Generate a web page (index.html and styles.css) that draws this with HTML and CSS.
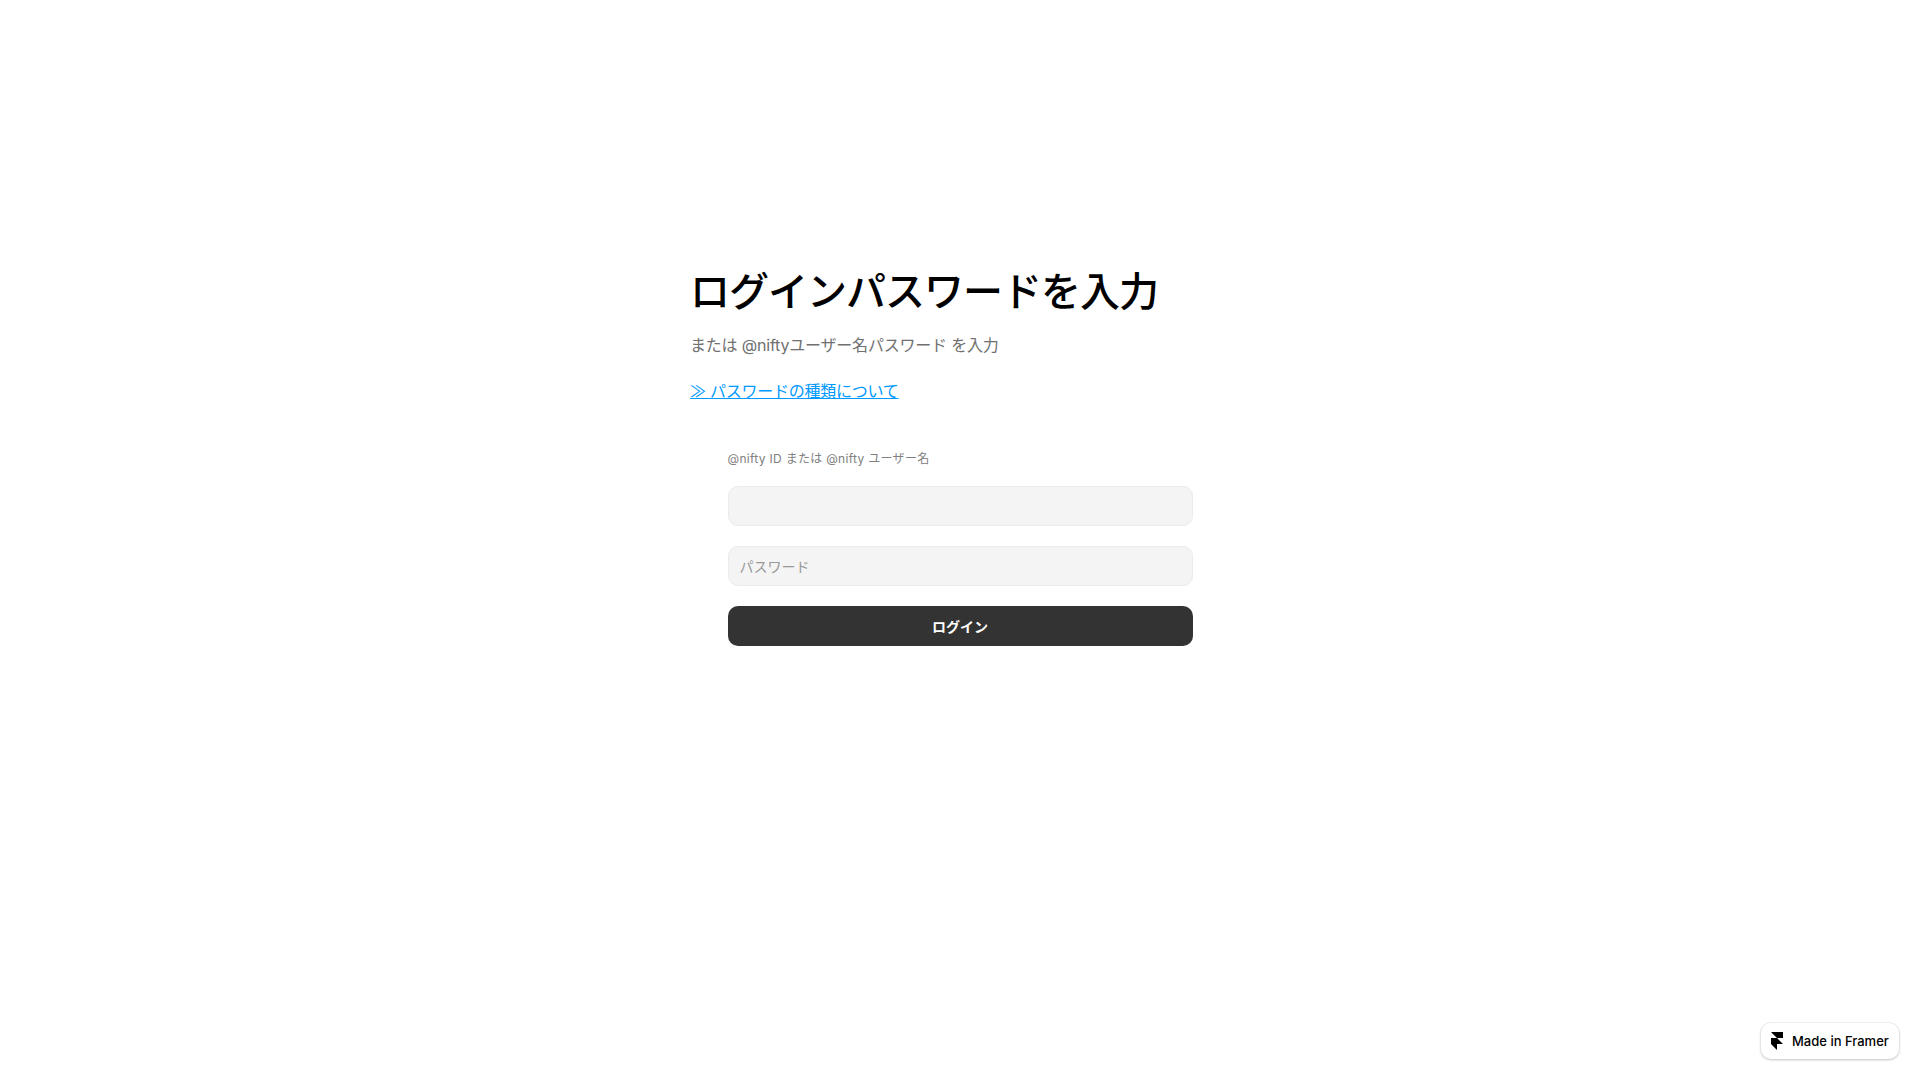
FILE: index.html
```html
<!DOCTYPE html>
<html lang="ja">
<head>
    <meta charset="UTF-8">
    <title>ログイン</title>
    <link rel="stylesheet" href="styles.css">
</head>
<body>
    <main class="login">
        <h1 class="login-title">ログインパスワードを入力</h1>
        <p class="login-sub">または @niftyユーザー名パスワード を入力</p>
        <a class="login-link" href="#">≫ パスワードの種類について</a>
        <form class="login-form">
            <label class="field-label" for="userId">@nifty ID または @nifty ユーザー名</label>
            <input class="field" type="text" id="userId">
            <input class="field" type="password" placeholder="パスワード">
            <button class="submit" type="button">ログイン</button>
        </form>
    </main>
    <a class="framer-badge" href="#">
        <svg class="framer-logo" viewBox="0 0 14 21" width="12" height="18">
            <path d="M0 0h14v7H7zM0 7h7l7 7H7v7l-7-7z" fill="#000"/>
        </svg>
        <span>Made in Framer</span>
    </a>
</body>
</html>
```

FILE: styles.css
```css
* {
    box-sizing: border-box;
}

body {
    margin: 0;
    height: 1080px;
    overflow: hidden;
    background-color: #fff;
    font-family: Inter, "Noto Sans CJK JP", sans-serif;
    display: flex;
    justify-content: center;
    position: relative;
}

.login {
    width: 540px;
    padding-top: 268px;
    display: flex;
    flex-direction: column;
    align-items: flex-start;
}

.login-title {
    margin: 0;
    font-size: 40px;
    line-height: 48px;
    font-weight: 500;
    letter-spacing: -1px;
    color: #000;
}

.login-sub {
    margin: 17px 0 0;
    font-size: 16px;
    line-height: 24px;
    letter-spacing: -0.2px;
    color: #707070;
}

.login-link {
    margin-top: 22px;
    font-size: 16px;
    line-height: 24px;
    letter-spacing: -0.25px;
    color: #09f;
}

.login-form {
    width: 465px;
    margin: 48px auto 0;
    display: flex;
    flex-direction: column;
}

.field-label {
    font-size: 12px;
    line-height: 16px;
    letter-spacing: 0.3px;
    color: #808080;
    margin-bottom: 19px;
}

.field {
    height: 40px;
    margin-bottom: 20px;
    padding: 0 11px;
    background-color: #f4f4f4;
    border: 1px solid #ebebeb;
    border-radius: 10px;
    font-family: inherit;
    font-size: 14px;
    outline: none;
}

.field::placeholder {
    color: #999;
}

.submit {
    height: 40px;
    background-color: #333;
    color: #fff;
    border: none;
    border-radius: 10px;
    font-family: inherit;
    font-size: 14px;
    font-weight: 700;
}

.framer-badge {
    position: absolute;
    right: 21px;
    bottom: 21px;
    height: 36px;
    width: 138px;
    padding-left: 10px;
    display: flex;
    align-items: center;
    gap: 9px;
    background-color: #fff;
    border-radius: 10px;
    box-shadow: 0 1px 3px rgba(0, 0, 0, 0.2), 0 0 0 1px rgba(0, 0, 0, 0.04);
    font-size: 13px;
    font-weight: 500;
    color: #000;
    text-decoration: none;
}
```
